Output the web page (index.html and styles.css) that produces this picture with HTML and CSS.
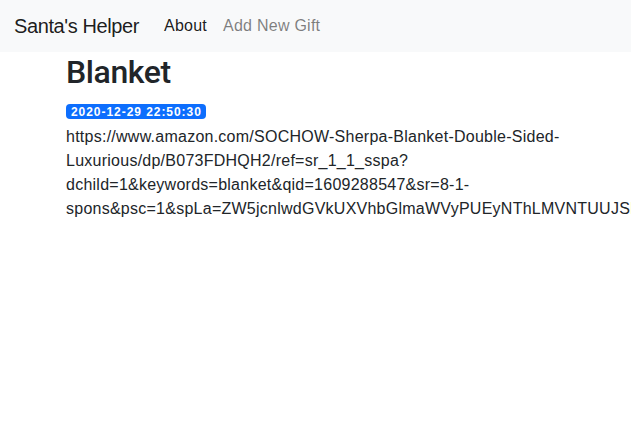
FILE: index.html
```html
<!DOCTYPE html>
<html lang="en">
<head>
<meta charset="utf-8">
<title>Santa's Helper</title>
<link rel="stylesheet" href="styles.css">
</head>
<body>
<nav class="navbar">
  <a class="brand" href="#">Santa's Helper</a>
  <ul class="nav">
    <li><a class="nav-link active" href="#">About</a></li>
    <li><a class="nav-link" href="#">Add New Gift</a></li>
  </ul>
</nav>
<main class="container">
  <h2 class="title">Blanket</h2>
  <span class="badge">2020-12-29 22:50:30</span>
  <p class="url">https://www.amazon.com/SOCHOW-Sherpa-Blanket-Double-Sided-Luxurious/dp/B073FDHQH2/ref=sr_1_1_sspa?dchild=1&amp;keywords=blanket&amp;qid=1609288547&amp;sr=8-1-spons&amp;psc=1&amp;spLa=ZW5jcnlwdGVkUXVhbGlmaWVyPUEyNThLMVNTUUJSNkZBJmVuY3J5cHRlZElkPUEwNDk3NjQ2MlQ0WkxUVkpGWE8yJmVuY3J5cHRlZEFkSWQ9QTA0NDI3MjQzRVJFMkdVQTFNMFc2JndpZGdldE5hbWU9c3BfYXRmJmFjdGlvbj1jbGlja1JlZGlyZWN0JmRvTm90TG9nQ2xpY2s9dHJ1ZQ==</p>
</main>
</body>
</html>
```
FILE: styles.css
```css
html, body {
  margin: 0;
  padding: 0;
  overflow: hidden;
}
body {
  font-family: "Liberation Sans", Arial, sans-serif;
  font-size: 16px;
  line-height: 1.5;
  letter-spacing: 0.25px;
  color: #212529;
  background: #fff;
  width: 631px;
  height: 423px;
}
.navbar {
  display: flex;
  align-items: center;
  height: 52px;
  padding: 0 14px;
  background: #f8f9fa;
  box-sizing: border-box;
}
.brand {
  font-size: 20px;
  line-height: 30px;
  letter-spacing: -0.4px;
  color: rgba(0, 0, 0, .9);
  text-decoration: none;
  margin-right: 17px;
}
.nav {
  display: flex;
  list-style: none;
  margin: 0;
  padding: 0;
}
.nav-link {
  display: block;
  padding: 0 8px;
  line-height: 24px;
  color: rgba(0, 0, 0, .5);
  text-decoration: none;
}
.nav-link.active {
  color: rgba(0, 0, 0, .9);
}
.container {
  width: 500px;
  padding-left: 66px;
}
.title {
  margin: 4px 0 0;
  font-family: Roboto, "Liberation Sans", Arial, sans-serif;
  font-size: 32px;
  line-height: 32px;
  font-weight: 500;
  letter-spacing: -0.4px;
  color: #212529;
  height: 48px;
}
.badge {
  display: inline-block;
  background: #0d6efd;
  color: #fff;
  font-size: 12px;
  font-weight: 700;
  line-height: 12px;
  letter-spacing: 0.95px;
  padding: 1.5px 4px 1.5px 5px;
  border-radius: 4px;
  vertical-align: top;
}
.url {
  margin: -3px 0 0;
  width: 500px;
}
```
